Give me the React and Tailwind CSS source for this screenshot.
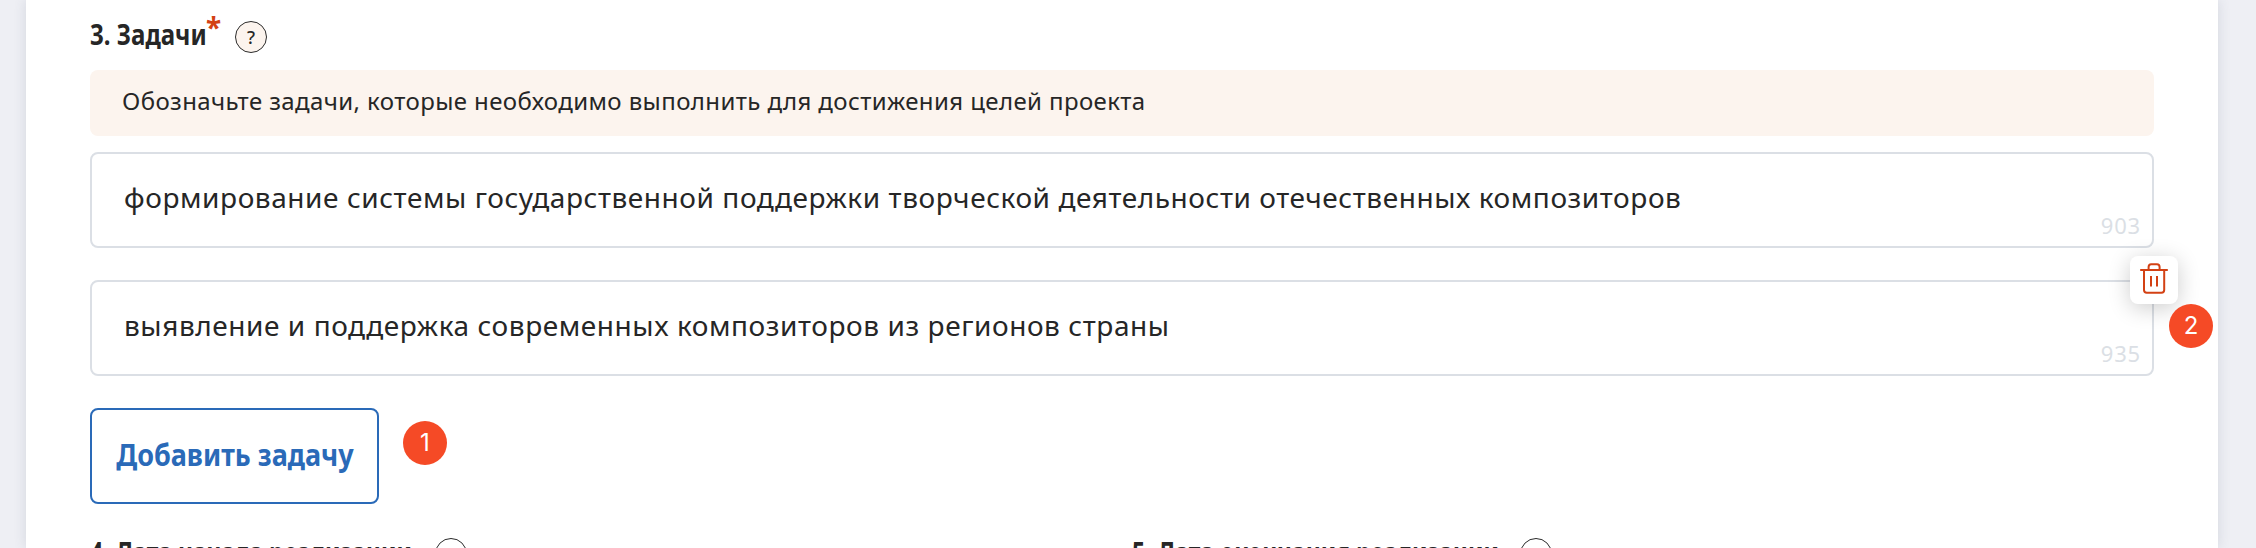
import React from "react";

function Hint({ plain }) {
  return (
    <span className={"flex size-8 items-center justify-center rounded-full border border-[#2b2b2b] text-[18px] font-medium leading-none text-[#262626] " + (plain ? "bg-white" : "bg-[#fcf4ee]")}>
      ?
    </span>
  );
}

function Task({ text, count, children }) {
  return (
    <div className="relative flex h-24 items-center rounded-lg border-2 border-[#dbdfe5] pb-1.5 pl-8">
      <p className="whitespace-nowrap text-[28px] leading-none tracking-[0.57px]">{text}</p>
      <span className="absolute bottom-2.5 right-[11px] text-[22px] leading-none tracking-[0.8px] text-[#dbdfe5]">{count}</span>
      {children}
    </div>
  );
}

function Badge({ children }) {
  return (
    <span className="flex size-11 items-center justify-center rounded-full bg-[#f54a26] pb-px font-['Inter',sans-serif] text-[24px] leading-none text-white">
      {children}
    </span>
  );
}

function TrashIcon() {
  return (
    <svg className="h-8 w-7" viewBox="0 0 28 32" fill="none" stroke="#d34114" strokeWidth="2">
      <path d="M0.2 7H27.8" />
      <path d="M8.6 7V4Q8.6 1.2 11.2 1.2H17Q19.6 1.2 19.6 4V7" />
      <path d="M4 7V27Q4 29.7 6.8 29.7H21.4Q24.2 29.7 24.2 27V7" />
      <path d="M11 13V23.6M17 13V23.6" />
    </svg>
  );
}

export default function App() {
  return (
    <div className="flex h-[548px] overflow-hidden bg-[#eeeff4] pl-[26px] pr-[38px] font-['Noto_Sans',sans-serif] text-[#262626]">
      <main className="flex w-full flex-col bg-white px-16 shadow-[0_0_12px_rgba(60,70,100,0.14)]">
        <div className="flex h-[70px] shrink-0 items-start pt-[21px]">
          <h2 className="-mt-[3px] w-[116px]">
            <span className="inline-block origin-left scale-x-[0.86] whitespace-nowrap text-[28px] font-bold leading-8">3. Задачи</span>
          </h2>
          <span className="-mt-2.5 w-[29px] text-[28px] font-bold leading-8 text-[#d34114]">*</span>
          <Hint />
        </div>
        <div className="flex h-[66px] shrink-0 items-center rounded-lg bg-[#fcf4ee] pb-1 pl-8">
          <p className="whitespace-nowrap text-[24px] leading-none tracking-[0.4px]">
            Обозначьте задачи, которые необходимо выполнить для достижения целей проекта
          </p>
        </div>
        <div className="mt-4 flex shrink-0 flex-col gap-8">
          <Task text="формирование системы государственной поддержки творческой деятельности отечественных композиторов" count="903" />
          <Task text="выявление и поддержка современных композиторов из регионов страны" count="935">
            <button className="absolute -right-[26px] -top-[26px] flex size-12 justify-center rounded-lg bg-white pt-[7px] shadow-[0_4px_22px_rgba(0,0,0,0.2)]">
              <TrashIcon />
            </button>
            <div className="absolute -right-[61px] top-[22px]">
              <Badge>2</Badge>
            </div>
          </Task>
        </div>
        <div className="mt-8 flex shrink-0 gap-6">
          <button className="flex h-24 w-[289px] items-center justify-center rounded-lg border-2 border-[#2a6ab8] pb-0.5 text-[#2a6ab8]">
            <span className="scale-x-90 whitespace-nowrap text-[30px] font-bold leading-none">Добавить задачу</span>
          </button>
          <div className="pt-[13px]">
            <Badge>1</Badge>
          </div>
        </div>
        <div className="mt-[34px] flex h-8 shrink-0">
          <div className="flex w-[1042px]">
            <h2 className="-mt-0.5 w-[345px]">
              <span className="inline-block origin-left scale-x-[0.82] whitespace-nowrap text-[28px] font-bold leading-8">4. Дата начала реализации</span>
            </h2>
            <Hint plain />
          </div>
          <div className="flex">
            <h2 className="-mt-0.5 w-[388px]">
              <span className="inline-block origin-left scale-x-[0.82] whitespace-nowrap text-[28px] font-bold leading-8">5. Дата окончания реализации</span>
            </h2>
            <Hint plain />
          </div>
        </div>
      </main>
    </div>
  );
}
